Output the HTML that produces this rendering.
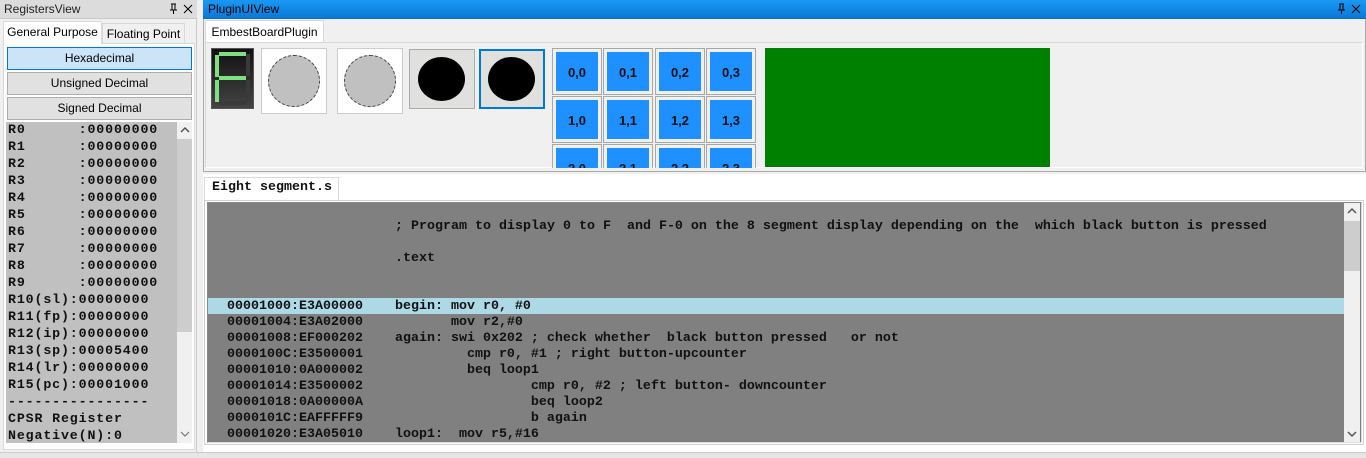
<!DOCTYPE html>
<html><head><meta charset="utf-8"><style>
*{margin:0;padding:0;box-sizing:border-box}
body{width:1366px;height:458px;background:#f0f0f0;position:relative;overflow:hidden;font-family:"Liberation Sans",sans-serif;font-size:12px;color:#000}
.a{position:absolute}
.mono{font-family:"Liberation Mono",monospace;font-weight:bold}
.btn{position:absolute;left:7px;width:185px;height:23px;border:1px solid #adadad;background:#e1e1e1;text-align:center;line-height:21px;font-size:12px}
.cell{position:absolute;width:50px;height:47px;border:1px solid #a8a8a8;background:#f0f0f0}
.cell div{position:absolute;left:3px;top:3px;right:3px;bottom:3px;background:#1e90ff;font-size:13px;font-weight:bold;text-align:center;line-height:41px;color:#111}
.reg{position:absolute;left:8px;font-size:13.3px;letter-spacing:0.85px;line-height:17px;white-space:pre;color:#111}
.code{position:absolute;font-size:13.33px;line-height:16px;white-space:pre;color:#111}
</style></head><body>
<!-- Left panel -->
<div class="a" style="left:0;top:0;width:197px;height:19px;background:#dcdcdc;border-bottom:1px solid #c8c8c8"></div>
<div class="a" style="left:4px;top:2px;font-size:12px;color:#222">RegistersView</div>
<svg class="a" style="left:168px;top:3px" width="26" height="12"><path d="M3 1h5M4 1v6M7 1v6M2 7h7M5.5 7v4" stroke="#000" fill="none"/><path d="M16 2l8 8M24 2l-8 8" stroke="#000"/></svg>
<div class="a" style="left:0;top:19px;width:197px;height:439px;background:#f0f0f0;border-right:1px solid #ccc"></div>
<div class="a" style="left:3px;top:43px;width:192px;height:407px;background:#fff;border:1px solid #d9d9d9"></div>
<div class="a" style="left:3px;top:21px;width:99px;height:23px;background:#fff;border:1px solid #d9d9d9;border-bottom:none;text-align:center;line-height:20px">General Purpose</div>
<div class="a" style="left:102px;top:23px;width:83px;height:20px;background:#f0f0f0;border:1px solid #d9d9d9;border-bottom:none;text-align:center;line-height:20px">Floating Point</div>
<div class="btn" style="top:47px;background:#cce4f7;border-color:#0078d7">Hexadecimal</div>
<div class="btn" style="top:72px">Unsigned Decimal</div>
<div class="btn" style="top:97px">Signed Decimal</div>
<div class="a" style="left:6px;top:122px;width:171px;height:321px;background:#c0c0c0"></div>
<div class="a" style="left:177px;top:122px;width:15px;height:321px;background:#f0f0f0"></div>
<div class="a" style="left:177px;top:139px;width:15px;height:193px;background:#cdcdcd"></div>
<svg class="a" style="left:180px;top:126px" width="10" height="8"><path d="M1 6l4-4 4 4" stroke="#555" fill="none" stroke-width="1.5"/></svg>
<svg class="a" style="left:180px;top:430px" width="10" height="8"><path d="M1 2l4 4 4-4" stroke="#777" fill="none" stroke-width="1.2"/></svg>
<div class="reg mono" style="top:121px">R0      :00000000
R1      :00000000
R2      :00000000
R3      :00000000
R4      :00000000
R5      :00000000
R6      :00000000
R7      :00000000
R8      :00000000
R9      :00000000
R10(sl):00000000
R11(fp):00000000
R12(ip):00000000
R13(sp):00005400
R14(lr):00000000
R15(pc):00001000
----------------
CPSR Register
Negative(N):0</div>

<!-- Plugin panel -->
<div class="a" style="left:203px;top:0;width:1163px;height:19px;background:linear-gradient(#1a98f5,#0a78d6);border-bottom:1px solid #0b6cc0"></div>
<div class="a" style="left:208px;top:2px;font-size:12px;color:#000">PluginUIView</div>
<svg class="a" style="left:1336px;top:3px" width="26" height="12"><path d="M3 1h5M4 1v6M7 1v6M2 7h7M5.5 7v4" stroke="#000" fill="none"/><path d="M16 2l8 8M24 2l-8 8" stroke="#000"/></svg>
<div class="a" style="left:203px;top:19px;width:1163px;height:153px;border:1px solid #aaa;border-top:none;background:#f0f0f0"></div>
<div class="a" style="left:205px;top:20px;width:119px;height:23px;background:#fff;border:1px solid #d9d9d9;border-bottom:none;text-align:center;line-height:22px">EmbestBoardPlugin</div>
<div class="a" style="left:205px;top:42px;width:1158px;height:126px;border:1px solid #d9d9d9;border-right-color:#fff;border-bottom-color:#fff"></div>
<!-- 7 seg -->
<div class="a" style="left:211px;top:48px;width:43px;height:61px;background:linear-gradient(#111,#444);border:1px solid #555"></div>
<svg class="a" style="left:211px;top:48px" width="43" height="61">
<g fill="#3a3a3a"><rect x="35" y="6" width="4" height="22"/><rect x="35" y="32" width="4" height="22"/><rect x="8" y="53" width="27" height="4"/></g>
<g fill="#7ee07e"><rect x="8" y="4" width="27" height="4"/><rect x="4" y="7" width="4" height="22"/><rect x="8" y="28" width="27" height="4"/><rect x="4" y="32" width="4" height="22"/></g>
</svg>
<!-- buttons -->
<div class="a" style="left:261px;top:48px;width:66px;height:66px;background:#fff;border:1px solid #ccc"></div>
<div class="a" style="left:268px;top:55px;width:52px;height:52px;border-radius:50%;background:#c0c0c0;border:1px dashed #444"></div>
<div class="a" style="left:337px;top:48px;width:66px;height:66px;background:#fff;border:1px solid #ccc"></div>
<div class="a" style="left:344px;top:55px;width:52px;height:52px;border-radius:50%;background:#c0c0c0;border:1px dashed #444"></div>
<div class="a" style="left:409px;top:49px;width:66px;height:60px;background:#e0e0de;border:1px solid #aaa"></div>
<div class="a" style="left:418px;top:57px;width:47px;height:44px;border-radius:50%;background:#000"></div>
<div class="a" style="left:479px;top:49px;width:66px;height:60px;background:#e0e0de;border:2px solid #0078d7"></div>
<div class="a" style="left:488px;top:57px;width:47px;height:44px;border-radius:50%;background:#000"></div>
<!-- grid -->
<div class="a" style="left:552px;top:48px;width:205px;height:120px;overflow:hidden">
<div class="cell" style="left:0;top:0"><div>0,0</div></div>
<div class="cell" style="left:51px;top:0"><div>0,1</div></div>
<div class="cell" style="left:103px;top:0"><div>0,2</div></div>
<div class="cell" style="left:154px;top:0"><div>0,3</div></div>
<div class="cell" style="left:0;top:48px"><div>1,0</div></div>
<div class="cell" style="left:51px;top:48px"><div>1,1</div></div>
<div class="cell" style="left:103px;top:48px"><div>1,2</div></div>
<div class="cell" style="left:154px;top:48px"><div>1,3</div></div>
<div class="cell" style="left:0;top:96px"><div>2,0</div></div>
<div class="cell" style="left:51px;top:96px"><div>2,1</div></div>
<div class="cell" style="left:103px;top:96px"><div>2,2</div></div>
<div class="cell" style="left:154px;top:96px"><div>2,3</div></div>
</div>
<div class="a" style="left:765px;top:48px;width:285px;height:119px;background:#008000"></div>

<!-- Editor -->
<div class="a" style="left:203px;top:174px;width:1163px;height:278px;background:#fff"></div>
<div class="a mono" style="left:204px;top:177px;width:135px;height:24px;background:#fff;border:1px solid #d9d9d9;border-bottom:none;font-size:13.33px;line-height:20px;padding-left:7px;font-weight:bold;color:#111">Eight segment.s</div>
<div class="a" style="left:204px;top:200px;width:1160px;height:245px;border:1px solid #d0d0d0"></div>
<div class="a" style="left:207px;top:202px;width:1155px;height:241px;border:1px solid #888;border-right-color:#ddd;border-bottom-color:#ddd;background:#808080"></div>
<div class="a" style="left:1344px;top:203px;width:16px;height:239px;background:#f0f0f0"></div>
<div class="a" style="left:1344px;top:221px;width:16px;height:50px;background:#cdcdcd"></div>
<svg class="a" style="left:1347px;top:207px" width="10" height="8"><path d="M1 6l4-4 4 4" stroke="#555" fill="none" stroke-width="1.5"/></svg>
<svg class="a" style="left:1347px;top:430px" width="10" height="8"><path d="M1 2l4 4 4-4" stroke="#555" fill="none" stroke-width="1.5"/></svg>
<div class="a" style="left:208px;top:298px;width:1136px;height:16px;background:#add8e6"></div>
<div class="code mono" style="left:395px;top:219px">; Program to display 0 to F  and F-0 on the 8 segment display depending on the  which black button is pressed</div>
<div class="code mono" style="left:395px;top:251px">.text</div>
<div class="code mono" style="left:227px;top:299px">00001000:E3A00000    begin: mov r0, #0
00001004:E3A02000           mov r2,#0
00001008:EF000202    again: swi 0x202 ; check whether  black button pressed   or not
0000100C:E3500001             cmp r0, #1 ; right button-upcounter
00001010:0A000002             beq loop1
00001014:E3500002                     cmp r0, #2 ; left button- downcounter
00001018:0A00000A                     beq loop2
0000101C:EAFFFFF9                     b again
00001020:E3A05010    loop1:  mov r5,#16</div>
<div class="a" style="left:0;top:452px;width:1366px;height:6px;background:#e6e6e6;border-top:1px solid #ccc"></div>
</body></html>
